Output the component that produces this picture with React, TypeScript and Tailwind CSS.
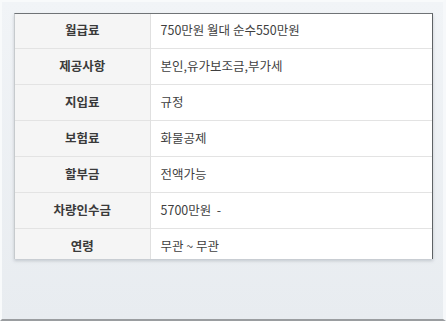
const rows: [string, string][] = [
  ['월급료', '750만원 월대 순수550만원'],
  ['제공사항', '본인,유가보조금,부가세'],
  ['지입료', '규정'],
  ['보험료', '화물공제'],
  ['할부금', '전액가능'],
  ['차량인수금', '5700만원  -'],
  ['연령', '무관 ~ 무관'],
];

export default function App() {
  return (
    <div
      className="w-[446px] h-[321px] bg-gradient-to-b from-[#f1f4f7] to-[#e8ecf0] border-l-2 border-t-2 border-l-[#f8fafb] border-t-[#f8fafb] border-b-2 border-b-[#9a9da0] border-r-[3px] border-r-[#f6f8fa] pl-3 pt-[11px]"
      style={{ fontFamily: '"Noto Sans CJK KR", "Noto Sans", sans-serif' }}
    >
      <div className="w-[419px] h-[246px] overflow-hidden bg-white border-t border-r border-l border-t-[#6f7376] border-r-[#5e6265] border-l-[#c6cacd] shadow-[0_2px_3px_rgba(120,130,140,0.35)]">
        <table className="w-full border-collapse text-[12.5px]">
          <tbody>
            {rows.map(([label, value], i) => (
              <tr key={label} className={`${i === 0 ? 'h-[34px]' : 'h-[36px]'} border-b border-[#e3e3e3]`}>
                <th className="w-[135px] bg-[#f5f5f5] border-r border-[#e0e0e0] text-center font-semibold text-[#3a3a3a]">
                  {label}
                </th>
                <td className="pl-[10px] text-left text-[#3f3f3f] whitespace-pre">{value}</td>
              </tr>
            ))}
          </tbody>
        </table>
      </div>
    </div>
  );
}
